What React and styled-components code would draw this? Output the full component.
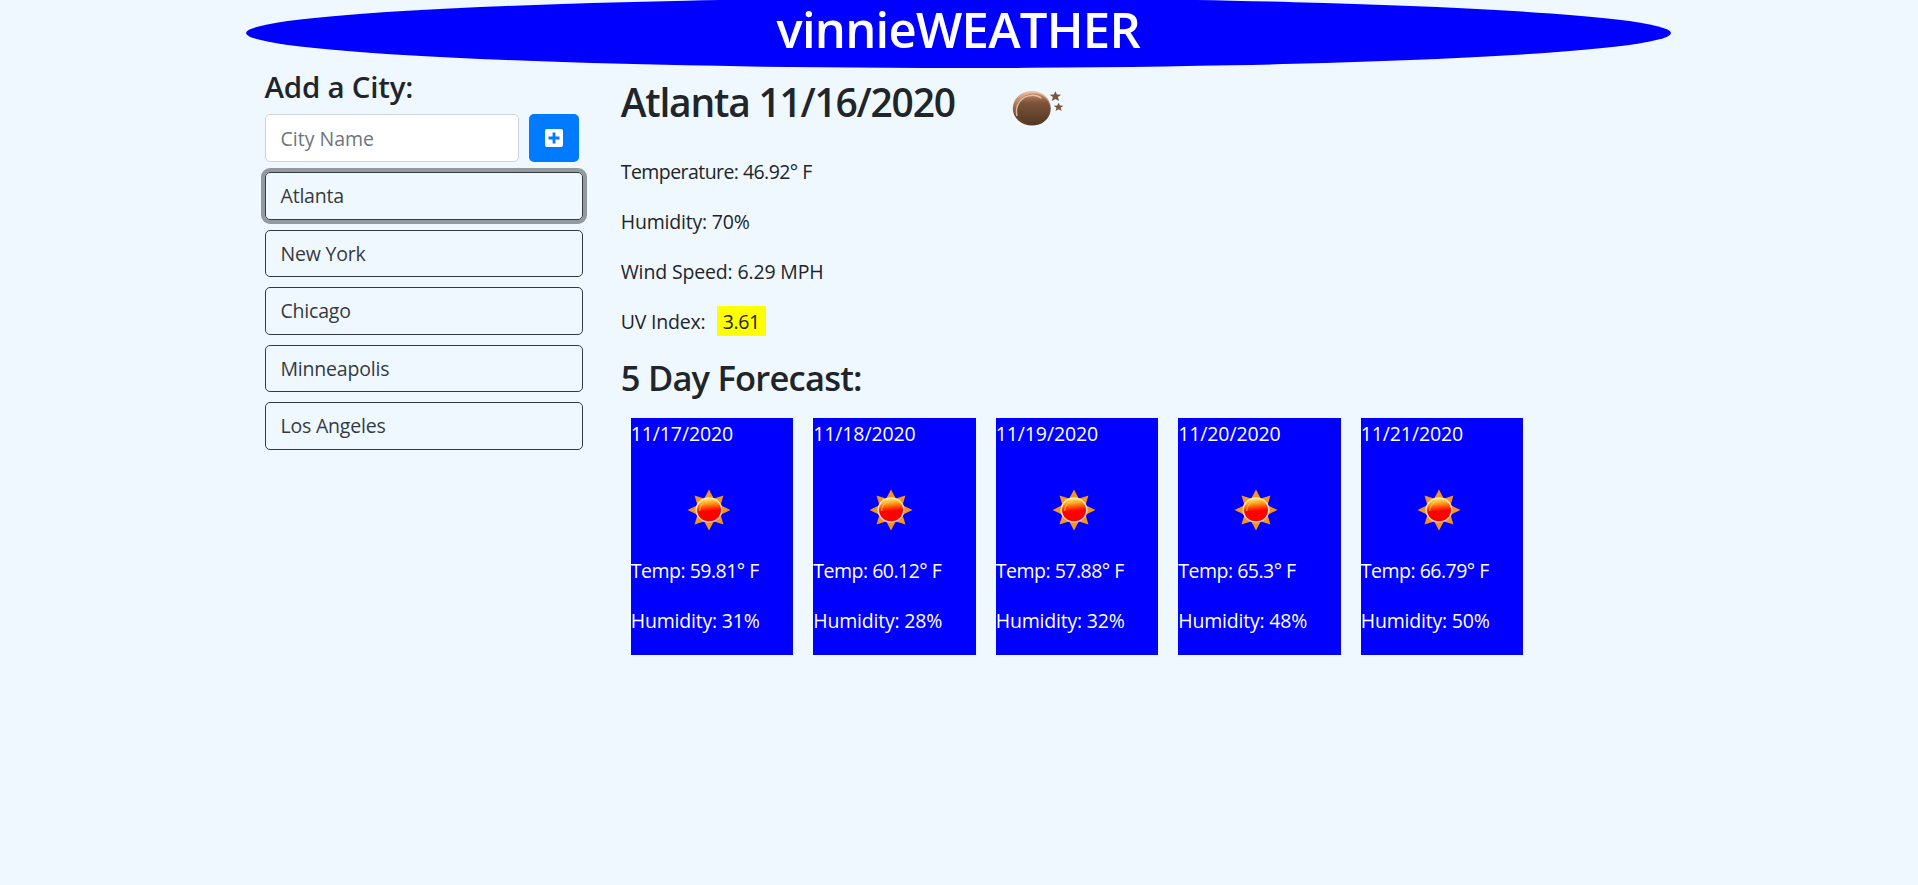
import React from "react";
import styled, { createGlobalStyle } from "styled-components";

const Global = createGlobalStyle`
  *, *::before, *::after { box-sizing: border-box; }
  body {
    margin: 0;
    background: #f0f8ff;
    color: #212529;
    font-family: "Open Sans", "Noto Sans", sans-serif;
    font-size: 19.5px;
    line-height: 31px;
  }
  h1, h2, h3, h4, p { margin: 0; font-weight: 600; }
`;

const Container = styled.div`
  width: 1425px;
  margin-left: calc(50% - 713.25px);
`;

const Banner = styled.header`
  height: 70px;
  margin-top: -2px;
  padding-top: 2px;
  border-radius: 50%;
  background: #0000ff;
  color: #fff;
  text-align: center;
`;

const BannerTitle = styled.h1`
  font-size: 49px;
  line-height: 58px;
  letter-spacing: -0.75px;
`;

const Columns = styled.div`
  display: flex;
  align-items: flex-start;
`;

const Sidebar = styled.aside`
  width: 356.25px;
  padding: 0 18.75px;
`;

const SidebarTitle = styled.h4`
  height: 46px;
  font-size: 29.5px;
  line-height: 38px;
  letter-spacing: -0.22px;
`;

const SearchRow = styled.form`
  display: flex;
  gap: 10px;
  margin-bottom: 10px;
`;

const CityInput = styled.input`
  width: 254.5px;
  height: 48px;
  padding: 0 15px;
  border: 1px solid #ced4da;
  border-radius: 5px;
  background: #fff;
  font: inherit;
  &::placeholder { color: #6c757d; opacity: 1; }
`;

const AddButton = styled.button`
  display: flex;
  align-items: center;
  justify-content: center;
  width: 50px;
  height: 48px;
  padding: 0;
  border: 0;
  border-radius: 5px;
  background: #007bff;
`;

const CityList = styled.div`
  display: flex;
  flex-direction: column;
  gap: 10px;
`;

const CityButton = styled.button`
  width: 100%;
  height: 47.5px;
  padding: 0 15px;
  border: 1px solid #343a40;
  border-radius: 5px;
  background: transparent;
  color: #343a40;
  font: inherit;
  letter-spacing: -0.2px;
  text-align: left;
  box-shadow: ${(p) => (p.$active ? "0 0 0 4px rgba(52, 58, 64, 0.5)" : "none")};
`;

const Main = styled.main`
  flex: 1;
  padding: 0 18.75px;
`;

const CurrentHeader = styled.div`
  display: flex;
  height: 88px;
`;

const CurrentTitle = styled.h2`
  width: 375px;
  padding-top: 9px;
  font-size: 39px;
  line-height: 50px;
  letter-spacing: -1.25px;
  white-space: nowrap;
`;

const Reading = styled.p`
  margin-bottom: 19px;
  font-weight: 400;
  letter-spacing: ${(p) => p.$spacing || 0}px;
`;

const UvRow = styled(Reading)`
  display: flex;
  align-items: flex-start;
`;

const UvLabel = styled.span`
  width: 96px;
`;

const UvBadge = styled.span`
  width: 49px;
  height: 30px;
  background: #ffff00;
  color: #212529;
  letter-spacing: -0.4px;
  text-align: center;
`;

const ForecastTitle = styled.h3`
  height: 62px;
  font-size: 34.5px;
  line-height: 44px;
  letter-spacing: -0.78px;
`;

const Forecast = styled.div`
  display: flex;
  gap: 20px;
  padding-left: 10px;
`;

const DayCard = styled.section`
  width: 162.5px;
  height: 237px;
  background: #0000ff;
  color: #fff;
`;

const SunSlot = styled.div`
  display: flex;
  justify-content: center;
  width: 156px;
  height: 87px;
  padding-top: 20px;
`;

const MoonArt = styled.svg`
  flex: none;
  margin-top: 10px;
`;

const PlusSquare = () => (
  <svg width="18" height="18" viewBox="0 0 18 18">
    <rect width="18" height="18" rx="2" fill="#fff" />
    <path d="M7.6 3.5h2.8v4.1h4.1v2.8h-4.1v4.1H7.6v-4.1H3.5V7.6h4.1z" fill="#007bff" />
  </svg>
);

const Moon = () => (
  <MoonArt width="80" height="60" viewBox="0 0 80 60">
    <defs>
      <linearGradient id="moonRim" x1="0" y1="0" x2="0" y2="1">
        <stop offset="0" stopColor="#edc4a8" />
        <stop offset="0.35" stopColor="#b37c5a" />
        <stop offset="0.7" stopColor="#6a4730" />
        <stop offset="1" stopColor="#5f402c" />
      </linearGradient>
      <linearGradient id="moonCore" x1="0" y1="0" x2="0" y2="1">
        <stop offset="0" stopColor="#c48763" />
        <stop offset="0.3" stopColor="#7b5338" />
        <stop offset="1" stopColor="#543724" />
      </linearGradient>
      <filter id="moonSoft" x="-10%" y="-10%" width="120%" height="120%">
        <feGaussianBlur stdDeviation="0.55" />
      </filter>
    </defs>
    <g filter="url(#moonSoft)">
      <ellipse cx="35.8" cy="30.3" rx="19" ry="17.3" fill="url(#moonRim)" />
      <ellipse cx="37.4" cy="31.3" rx="16.8" ry="15.7" fill="url(#moonCore)" />
      <path d="M21 38C18.4 27 25.5 18.2 35 17.4c4-.2 8 .8 10.5 2.8" fill="none" stroke="#f3d3bd" strokeWidth="1.5" opacity=".8" />
      <path d="M59.4 13.2l1.5 3.4 4.3.2-3.3 2.3 1.2 4-3.7-2.2-3.7 2.2 1.2-4-3.3-2.3 4.3-.2z" fill="#7c543d" />
      <path d="M62.6 24.8l1.3 2.8 3.5.2-2.7 1.9 1 3.3-3.1-1.8-3.1 1.8 1-3.3-2.7-1.9 3.5-.2z" fill="#7c543d" />
    </g>
  </MoonArt>
);

const RAYS = [
  [0, 20.5], [45, 20.5], [90, 21.5], [135, 20.5],
  [180, 20.5], [225, 20.5], [270, 21.5], [315, 20.5],
];

const Sun = () => (
  <svg width="44" height="44" viewBox="-22 -22 44 44">
    <defs>
      <linearGradient id="sunCore" x1="0.4" y1="0" x2="0.5" y2="1">
        <stop offset="0" stopColor="#ffe27a" />
        <stop offset="0.22" stopColor="#ff9c16" />
        <stop offset="0.42" stopColor="#ff3a05" />
        <stop offset="0.55" stopColor="#ff0000" />
      </linearGradient>
      <linearGradient id="sunRim" x1="0" y1="0" x2="0" y2="1">
        <stop offset="0" stopColor="#fff0a0" />
        <stop offset="0.35" stopColor="#ffe3ce" />
        <stop offset="1" stopColor="#ffc9b4" />
      </linearGradient>
      <filter id="sunSoft" x="-10%" y="-10%" width="120%" height="120%">
        <feGaussianBlur stdDeviation="0.45" />
      </filter>
    </defs>
    <g filter="url(#sunSoft)">
      {RAYS.map(([angle, length]) => (
        <path key={angle} d={`M-5 -11L0 ${-length}L5 -11z`} transform={`rotate(${angle})`} fill="#f7941d" />
      ))}
      <ellipse rx="13.5" ry="12.7" fill="url(#sunRim)" />
      <ellipse rx="12" ry="11.2" fill="url(#sunCore)" />
      <path d="M-9.3 1C-9.6-4-6-8.2-1-8.7" fill="none" stroke="#ffc83c" strokeWidth="1.4" opacity=".65" />
    </g>
  </svg>
);

const CITIES = ["Atlanta", "New York", "Chicago", "Minneapolis", "Los Angeles"];

const DAYS = [
  { date: "11/17/2020", temp: "59.81", humidity: 31 },
  { date: "11/18/2020", temp: "60.12", humidity: 28 },
  { date: "11/19/2020", temp: "57.88", humidity: 32 },
  { date: "11/20/2020", temp: "65.3", humidity: 48 },
  { date: "11/21/2020", temp: "66.79", humidity: 50 },
];

export default function App() {
  return (
    <>
      <Global />
      <Container>
        <Banner>
          <BannerTitle>vinnieWEATHER</BannerTitle>
        </Banner>
        <Columns>
          <Sidebar>
            <SidebarTitle>Add a City:</SidebarTitle>
            <SearchRow>
              <CityInput placeholder="City Name" />
              <AddButton type="button" aria-label="Add city">
                <PlusSquare />
              </AddButton>
            </SearchRow>
            <CityList>
              {CITIES.map((city, i) => (
                <CityButton key={city} $active={i === 0}>{city}</CityButton>
              ))}
            </CityList>
          </Sidebar>
          <Main>
            <CurrentHeader>
              <CurrentTitle>Atlanta 11/16/2020</CurrentTitle>
              <Moon />
            </CurrentHeader>
            <Reading $spacing={-0.56}>Temperature: 46.92° F</Reading>
            <Reading $spacing={-0.2}>Humidity: 70%</Reading>
            <Reading $spacing={-0.15}>Wind Speed: 6.29 MPH</Reading>
            <UvRow $spacing={-0.2}>
              <UvLabel>UV Index:</UvLabel>
              <UvBadge>3.61</UvBadge>
            </UvRow>
            <ForecastTitle>5 Day Forecast:</ForecastTitle>
            <Forecast>
              {DAYS.map((day) => (
                <DayCard key={day.date}>
                  <Reading $spacing={-0.12}>{day.date}</Reading>
                  <SunSlot>
                    <Sun />
                  </SunSlot>
                  <Reading $spacing={-0.5}>Temp: {day.temp}° F</Reading>
                  <Reading $spacing={-0.2}>Humidity: {day.humidity}%</Reading>
                </DayCard>
              ))}
            </Forecast>
          </Main>
        </Columns>
      </Container>
    </>
  );
}
